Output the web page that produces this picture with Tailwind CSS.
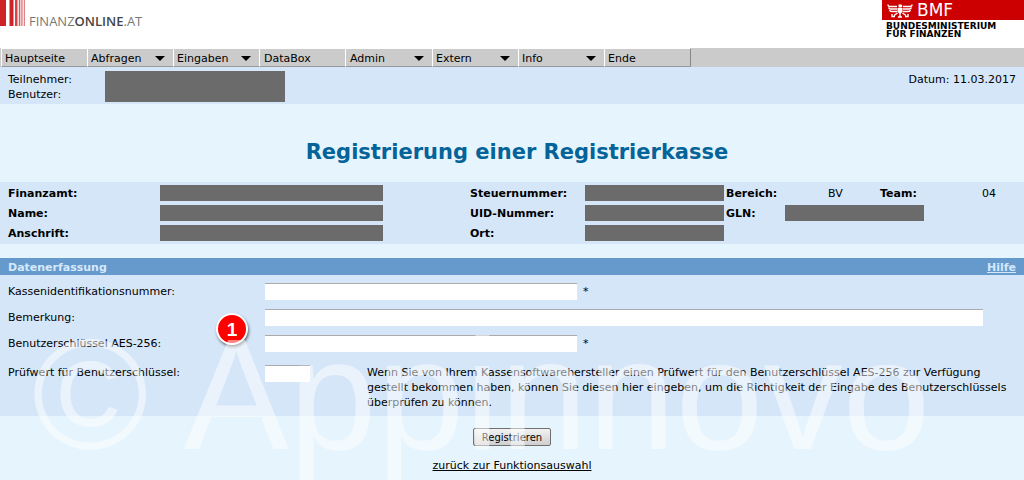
<!DOCTYPE html>
<html lang="de">
<head>
    <meta charset="UTF-8">
    <meta name="viewport" content="width=device-width, initial-scale=1.0">
    <title>FinanzOnline - Registrierung einer Registrierkasse</title>
    <script src="https://cdn.jsdelivr.net/npm/@tailwindcss/browser@4"></script>
</head>
<body class="relative min-h-screen overflow-hidden bg-[#e6f4fd] font-['DejaVu_Sans',sans-serif] text-[11px] leading-[15px] text-black">
    <header class="flex h-12 items-start justify-between bg-white">
        <a href="#" class="flex items-start">
            <svg class="h-[26px] w-[25px]" viewBox="0 0 25 26" fill="#cf2229">
                <rect x="0" width="6" height="26"/>
                <rect x="9.500" width="4" height="26"/>
                <rect x="15" width="2.500" height="26" opacity=".85"/>
                <rect x="18.800" width="1.500" height="26" opacity=".75"/>
                <rect x="21.300" width="1.200" height="26" opacity=".7"/>
                <rect x="23.800" width="1" height="26" opacity=".7"/>
            </svg>
            <span class="mt-3 ml-1 font-['Open_Sans',sans-serif] text-[13px] leading-[18px] text-[#777]">FINANZ<b class="font-semibold text-[#444]">ONLINE</b>.AT</span>
        </a>
        <div class="w-[142px]">
            <div class="flex h-5 items-center gap-1 bg-[#cc0000] pl-[5px] text-white">
                <svg class="h-[15px] w-[26px]" viewBox="0 0 26 15" fill="none" stroke="#fff">
                    <path d="M10 3.500H3Q1 3.500 1 1.500M10 6H4Q2 6 1.500 4.500M10 8.500H5Q3 8.500 2.500 7M16 3.500h7q2 0 2-2M16 6h6q2 0 2.500-1.500M16 8.500h5q2 0 2.500-1.500" stroke-width="1.400"/>
                    <path d="M11.500 1.500h3l1 1.500-1 1.500h-3zM10.500 5h5v4L13 11l-2.500-2z" fill="#fff" stroke="none"/>
                    <path d="M10.500 10L7 12.500M5 11v2.500h3M15.500 10l3.500 2.500M21 11v2.500h-3M13 10v4.500M11 14h4" stroke-width="1.400"/>
                </svg>
                <span class="text-[17px] leading-5">BMF</span>
            </div>
            <div class="mt-[2px] pl-1 text-[9px] leading-[8px] font-bold">BUNDESMINISTERIUM<br>FÜR FINANZEN</div>
        </div>
    </header>

    <nav class="flex h-[19px] bg-[#cbcbcb] pl-px leading-[17px]">
        <button class="flex w-[86px] items-center justify-between border-t border-b border-l border-t-white border-b-[#999] border-l-white pt-[2px] pr-2 pl-[3px]">Hauptseite</button>
        <button class="flex w-[86px] items-center justify-between border-t border-b border-l border-t-white border-b-[#999] border-l-white pt-[2px] pr-2 pl-[3px]">Abfragen <svg class="h-[5px] w-[10px]" viewBox="0 0 10 5"><path d="M0 0h10L5 5z"/></svg></button>
        <button class="flex w-[86px] items-center justify-between border-t border-b border-l border-t-white border-b-[#999] border-l-white pt-[2px] pr-2 pl-[3px]">Eingaben <svg class="h-[5px] w-[10px]" viewBox="0 0 10 5"><path d="M0 0h10L5 5z"/></svg></button>
        <button class="flex w-[86px] items-center justify-between border-t border-b border-l border-t-white border-b-[#999] border-l-white pt-[2px] pr-2 pl-1">DataBox</button>
        <button class="flex w-[87px] items-center justify-between border-t border-b border-l border-t-white border-b-[#999] border-l-white pt-[2px] pr-2 pl-1">Admin <svg class="h-[5px] w-[10px]" viewBox="0 0 10 5"><path d="M0 0h10L5 5z"/></svg></button>
        <button class="flex w-[86px] items-center justify-between border-t border-b border-l border-t-white border-b-[#999] border-l-white pt-[2px] pr-2 pl-[3px]">Extern <svg class="h-[5px] w-[10px]" viewBox="0 0 10 5"><path d="M0 0h10L5 5z"/></svg></button>
        <button class="flex w-[86px] items-center justify-between border-t border-b border-l border-t-white border-b-[#999] border-l-white pt-[2px] pr-2 pl-[3px]">Info <svg class="h-[5px] w-[10px]" viewBox="0 0 10 5"><path d="M0 0h10L5 5z"/></svg></button>
        <button class="flex w-[87px] items-center justify-between border border-t-white border-r-[#888] border-b-[#999] border-l-white pt-[2px] pr-2 pl-[3px]">Ende</button>
    </nav>

    <section class="flex h-[37px] items-start bg-[#d5e6f8] px-2 pt-1">
        <div class="w-[97px] pt-px">Teilnehmer:<br>Benutzer:</div>
        <div class="h-[31px] w-[180px] bg-[#6b6b6b]"></div>
        <div class="ml-auto pt-px">Datum: 11.03.2017</div>
    </section>

    <h1 class="pt-[34px] pb-4 pl-[10px] text-center text-[21px] leading-7 font-bold text-[#046399]">Registrierung einer Registrierkasse</h1>

    <section class="grid auto-rows-[20px] grid-cols-[152fr_310fr_115fr_141fr_59fr_95fr_102fr_42fr] items-center bg-[#d5e6f8] pt-px pb-px pl-2">
        <b>Finanzamt:</b>
        <div class="mr-[28%] h-4 bg-[#6b6b6b]"></div>
        <b>Steuernummer:</b>
        <div class="mr-[2px] h-4 bg-[#6b6b6b]"></div>
        <b>Bereich:</b>
        <span class="pl-[43px]">BV</span>
        <b>Team:</b>
        <span>04</span>

        <b>Name:</b>
        <div class="mr-[28%] h-4 bg-[#6b6b6b]"></div>
        <b>UID-Nummer:</b>
        <div class="mr-[2px] h-4 bg-[#6b6b6b]"></div>
        <b>GLN:</b>
        <div class="col-span-3 mr-[42%] h-4 bg-[#6b6b6b]"></div>

        <b>Anschrift:</b>
        <div class="mr-[28%] h-4 bg-[#6b6b6b]"></div>
        <b>Ort:</b>
        <div class="mr-[2px] h-4 bg-[#6b6b6b]"></div>
    </section>

    <div class="mt-[14px] flex h-[17px] items-end justify-between bg-[#6699cc] px-2 font-bold text-[#d5e9fb]">
        <h2>Datenerfassung</h2>
        <a href="#" class="underline">Hilfe</a>
    </div>

    <form>
        <div class="flex flex-col gap-[9px] bg-[#d5e6f8] px-2 pt-2 pb-[6px]">
            <div class="flex items-center">
                <label for="kassenid" class="w-[257px]">Kassenidentifikationsnummer:</label>
                <input id="kassenid" type="text" class="h-[17px] w-[312px] border-t border-[#aaa] bg-white px-1">
                <span class="ml-[6px]">*</span>
            </div>
            <div class="flex items-center">
                <label for="bemerkung" class="w-[257px]">Bemerkung:</label>
                <input id="bemerkung" type="text" class="mr-[33px] h-[17px] flex-1 border-t border-[#aaa] bg-white px-1">
            </div>
            <div class="relative flex items-center">
                <label for="schluessel" class="w-[257px]">Benutzerschlüssel AES-256:</label>
                <input id="schluessel" type="text" class="h-[17px] w-[312px] border-t border-[#aaa] bg-white px-1">
                <span class="ml-[6px]">*</span>
                <span class="absolute -top-[22px] left-[208px] flex size-8 items-center justify-center rounded-full border-2 border-white bg-[#f00] font-['Liberation_Sans',sans-serif] text-[19px] font-bold text-white shadow-[1px_2px_3px_#0008]">1</span>
            </div>
            <div class="mt-1 flex items-start">
                <label for="pruefwert" class="w-[257px]">Prüfwert für Benutzerschlüssel:</label>
                <input id="pruefwert" type="text" class="h-[17px] w-[45px] border-t border-[#aaa] bg-white px-1">
                <p class="ml-[57px] flex-1">Wenn Sie von Ihrem Kassensoftwarehersteller einen Prüfwert für den Benutzerschlüssel AES-256 zur Verfügung gestellt bekommen haben, können Sie diesen hier eingeben, um die Richtigkeit der Eingabe des Benutzerschlüssels überprüfen zu können.</p>
            </div>
        </div>
        <div class="flex flex-col items-center gap-3 pt-3">
            <button type="submit" class="h-[18px] rounded-[2px] border border-[#707070] bg-linear-to-b from-[#f2f2f2] to-[#cfcfcf] px-2 text-[10px]">Registrieren</button>
            <a href="#" class="underline">zurück zur Funktionsauswahl</a>
        </div>
    </form>

    <div class="pointer-events-none absolute top-[304px] left-[32px] font-['Liberation_Sans',sans-serif] text-[158px] leading-[180px] whitespace-nowrap text-white/50">© Appinnovo</div>
</body>
</html>
